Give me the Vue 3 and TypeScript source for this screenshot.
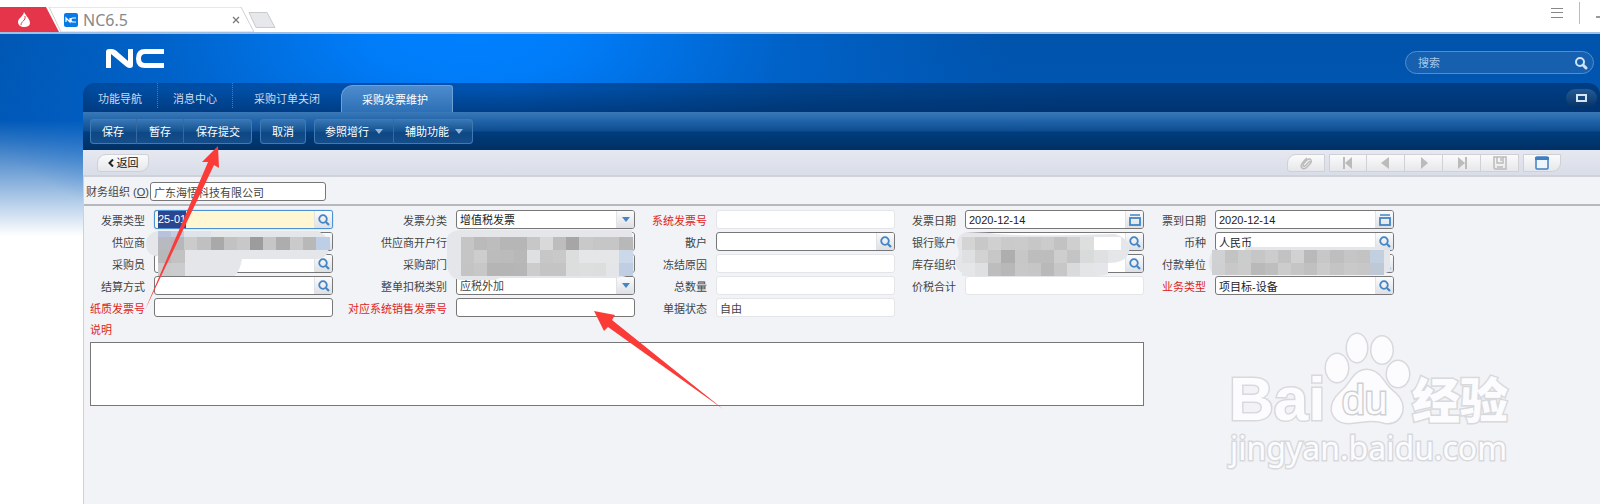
<script setup lang="ts">
import { ref } from 'vue'

type Kind = 'search' | 'select' | 'date' | 'text' | 'readonly'
interface Field {
  id: string
  label: string
  kind: Kind
  value?: string
  required?: boolean
  focused?: boolean
  soft?: boolean
}
interface Mosaic {
  x: number
  y: number
  h: number
  cells: string[]
}

const rows: (Field | null)[][] = [
  [
    { id: 'invoiceType', label: '发票类型', kind: 'search', value: '25-01', focused: true },
    { id: 'invoiceClass', label: '发票分类', kind: 'select', value: '增值税发票' },
    { id: 'systemNo', label: '系统发票号', kind: 'readonly', required: true },
    { id: 'invoiceDate', label: '发票日期', kind: 'date', value: '2020-12-14' },
    { id: 'arrivalDate', label: '票到日期', kind: 'date', value: '2020-12-14' },
  ],
  [
    { id: 'supplier', label: '供应商', kind: 'search' },
    { id: 'supplierBank', label: '供应商开户行', kind: 'search' },
    { id: 'retail', label: '散户', kind: 'search' },
    { id: 'bankAccount', label: '银行账户', kind: 'search' },
    { id: 'currency', label: '币种', kind: 'search', value: '人民币' },
  ],
  [
    { id: 'buyer', label: '采购员', kind: 'search' },
    { id: 'department', label: '采购部门', kind: 'search' },
    { id: 'freezeReason', label: '冻结原因', kind: 'readonly' },
    { id: 'stockOrg', label: '库存组织', kind: 'search' },
    { id: 'payer', label: '付款单位', kind: 'search' },
  ],
  [
    { id: 'settlement', label: '结算方式', kind: 'search' },
    { id: 'taxClass', label: '整单扣税类别', kind: 'select', value: '应税外加', soft: true },
    { id: 'totalQty', label: '总数量', kind: 'readonly' },
    { id: 'totalTax', label: '价税合计', kind: 'readonly' },
    { id: 'bizType', label: '业务类型', kind: 'search', value: '项目标-设备', required: true },
  ],
  [
    { id: 'paperNo', label: '纸质发票号', kind: 'text', required: true },
    { id: 'salesNo', label: '对应系统销售发票号', kind: 'text', required: true },
    { id: 'status', label: '单据状态', kind: 'readonly', value: '自由' },
    null,
    null,
  ],
]

const tabs = ['功能导航', '消息中心', '采购订单关闭', '采购发票维护']
const activeTab = ref('采购发票维护')
const actionGroups = [
  [{ text: '保存' }, { text: '暂存' }, { text: '保存提交' }],
  [{ text: '取消' }],
  [{ text: '参照增行', menu: true }, { text: '辅助功能', menu: true }],
]

const mosaics: Mosaic[] = [
  { x: 158, y: 231, h: 6, cells: ['#b9c2dc', '#c5cce2', '#dfe3ea', '#dfe3ea', '#e6e8e8', '#e6e8e8'] },
  { x: 158, y: 237, h: 13, cells: ['#b9babf', '#b5b7ba', '#cbcbcb', '#c0c0c0', '#a9a9a9', '#c2c2c2', '#c8c8c8', '#9c9c9c', '#c6c6c6', '#adadad', '#cacaca', '#b8b8b8', '#bdcfe6'] },
  { x: 158, y: 250, h: 13, cells: ['#b7b8ba', '#c2c2c3'] },
  { x: 158, y: 263, h: 13, cells: ['#c9cacc', '#cbccce'] },
  { x: 461, y: 237, h: 13, cells: ['#c5c5c5', '#bababa', '#bdbdbd', '#b6b6b6', '#b6b6b6', '#c7c7c7', '#d9d9d9', '#bdbdbd', '#a6a6a6', '#c9c9c9', '#c6c6c6', '#c6c6c6', '#b8b8b8'] },
  { x: 461, y: 250, h: 13, cells: ['#c5c5c5', '#cdcdcd', '#bcbcbc', '#bbbbbb', '#b8b8b8', '#dfe0e1', '#c7c7c7', '#c9c9c9', '#dcdddd', '#e5e6e7', '#e5e6e7', '#e5e6e7', '#cbd8e9'] },
  { x: 461, y: 263, h: 13, cells: ['#c4c4c4', '#c7c7c7', '#b5b5b5', '#b5b5b5', '#b6b6b6', '#cccccc', '#c4c4c4', '#c4c4c4', '#dcdddd', '#dddede', '#dcdddd', '#e3e5e8', '#bfcee2'] },
  { x: 962, y: 237, h: 13, cells: ['#d4d4d4', '#c8c8c8', '#d0d0d0', '#cacaca', '#cbcbcb', '#c7c7c7', '#cbcbcb', '#c2c2c2', '#cfcfcf', '#dddede', '#ffffff', '#ffffff'] },
  { x: 962, y: 250, h: 13, cells: ['#dfe0e1', '#d2d2d2', '#c7c7c7', '#aeaeae', '#c7c7c7', '#bdbdbd', '#bdbdbd', '#cecece', '#c4c4c4', '#d9dada', '#dfe0e1'] },
  { x: 962, y: 263, h: 13, cells: ['#e5e6e7', '#dfe0e1', '#bdbdbd', '#b8b8b8', '#c8c8c8', '#c6c6c6', '#b9b9b9', '#c7c7c7', '#d9dada', '#e4e5e7'] },
  { x: 1212, y: 250, h: 13, cells: ['#d0d1d2', '#c3c3c3', '#cbcccc', '#c6c6c6', '#cccccc', '#c2c2c2', '#d1d1d1', '#b9b9b9', '#c7c7c7', '#bebebe', '#c5c5c5', '#c3c3c3', '#c2cfdf'] },
  { x: 1212, y: 263, h: 12, cells: ['#cfd0d1', '#c8c8c8', '#cccccc', '#b9b9b9', '#bebebe', '#cccccc', '#c5c5c5', '#c0c0c0', '#cbcbcb', '#c4c4c4', '#c9c9c9', '#c7c7c7', '#bfc9d6'] },
]
</script>

<template>
  <div class="page">
    <header class="browser">
      <button class="home" aria-label="主页">
        <svg class="home-bg" viewBox="0 0 60 26" preserveAspectRatio="none"><path d="M0 0H46L59 26H0z" fill="#e5354b" /></svg>
        <svg class="flame" viewBox="0 0 14 17"><path d="M7 1C9 5 13 8 13 12C13 15 10 16 7 16C4 16 1 14 1 11C1 7 6 6 7 1z" fill="#fff" /><path d="M8 5C9 10 4 10 4 14" fill="none" stroke="#e5354b" stroke-width="1" /></svg>
      </button>
      <div class="browser-tab">
        <svg class="tab-bg" viewBox="0 0 206 26" preserveAspectRatio="none"><path d="M1 0H193L206 26H13z" fill="#fff" stroke="#cfcfcf" /></svg>
        <svg class="favicon" viewBox="0 0 14 14"><rect width="14" height="14" rx="2" fill="#087ae8" /><path d="M2 9V5L6 9V5M12 5H9Q7 5 7 7T9 9H12" fill="none" stroke="#fff" stroke-width="1.2" /></svg>
        <span class="tab-title">NC6.5</span>
        <button class="close" aria-label="关闭标签页"><svg viewBox="0 0 8 8"><path d="M1 1L7 7M7 1L1 7" stroke="#777" stroke-width="1.2" /></svg></button>
      </div>
      <button class="new-tab" aria-label="新标签页"><svg viewBox="0 0 28 16"><path d="M1 .5H19L27 15.500H8z" fill="#e7e8ec" stroke="#c9cacc" /></svg></button>
      <div class="window-tools">
        <button aria-label="菜单"><svg width="12" height="12" viewBox="0 0 12 12"><path d="M0 1.500H12M0 5.500H12M0 10.500H12" stroke="#888" /></svg></button>
        <i class="divider"></i>
        <button aria-label="最小化" class="minimise"><svg width="4" height="12" viewBox="0 0 4 12"><path d="M0 10H4" stroke="#999" stroke-width="2" /></svg></button>
      </div>
    </header>

    <div class="app">
      <div class="banner">
        <svg class="logo" viewBox="0 0 58 19" role="img" aria-label="NC"><path d="M0 19V3Q0 0 3 0H6Q8 0 10 1.500L22 12V0H27V16Q27 19 24 19Q22 19 20 17.500L5 5V19zM58 0H39Q30 0 30 9.500Q30 19 39 19H58V14H39Q35 14 35 9.500Q35 5 39 5H58z" fill="#fff" /></svg>
        <div class="global-search">
          <input aria-label="搜索" placeholder="搜索">
          <button aria-label="开始搜索"><svg viewBox="0 0 14 14"><circle cx="6" cy="6" r="4" /><path d="M9 9L12 12" stroke-width="3" stroke-linecap="round" /></svg></button>
        </div>
      </div>

      <div class="workspace">
        <nav class="tabs">
          <button v-for="(tab, i) in tabs" :key="tab" :class="['tab', `tab-${i}`, { active: tab === activeTab }]" @click="activeTab = tab">{{ tab }}</button>
          <button class="restore" aria-label="还原"><i></i></button>
        </nav>
        <div class="actions">
          <div v-for="(group, i) in actionGroups" :key="i" class="action-group">
            <button v-for="a in group" :key="a.text" :class="{ menu: 'menu' in a }">{{ a.text }}<i v-if="'menu' in a" class="caret"></i></button>
          </div>
        </div>
        <div class="subbar">
          <button class="back"><svg viewBox="0 0 6 8"><path d="M5 .5L1.500 4L5 7.500" fill="none" stroke="#222" stroke-width="2" /></svg>返回</button>
          <div class="pager">
            <button class="round-left" aria-label="附件"><svg viewBox="0 0 14 14"><path d="M11 5L6 10Q4 11 4 9Q4 8 8 4Q11 2 12 4Q13 6 10 9L7 12Q3 14 2 10Q2 8 5 5L8 2" fill="none" stroke="#bbb" stroke-width="1.500" /></svg></button>
            <div class="pager-group">
              <button aria-label="第一条"><svg viewBox="0 0 14 14"><path d="M2 1H4V13H2zM11 1V13L4 7z" /></svg></button>
              <button aria-label="上一条"><svg viewBox="0 0 14 14"><path d="M10 1V13L2 7z" /></svg></button>
              <button aria-label="下一条"><svg viewBox="0 0 14 14"><path d="M4 1V13L11 7z" /></svg></button>
              <button aria-label="最后一条"><svg viewBox="0 0 14 14"><path d="M3 1V13L10 7zM10 1H12V13H10z" /></svg></button>
              <button aria-label="保存"><svg viewBox="0 0 14 14"><path d="M1 1H13V13H2L1 12zM4 1V7H10V1M8 2V5M4 11H10" fill="none" stroke="#bbb" stroke-width="1.500" /></svg></button>
            </div>
            <button class="round-right" aria-label="卡片显示"><svg viewBox="0 0 14 14"><rect x="1" y="1" width="12" height="12" rx="1" fill="#edf5ff" stroke="#3f7fc4" stroke-width="1.500" /><path d="M0 1H14V4H0z" fill="#3f7fc4" /></svg></button>
          </div>
        </div>

        <form @submit.prevent>
          <div class="org">
            <label for="org">财务组织 (<u>O</u>)</label>
            <input id="org" class="box" value="广东海悟科技有限公司">
          </div>
          <div class="fields">
            <template v-for="(row, r) in rows" :key="r">
              <template v-for="(f, c) in row" :key="c">
                <template v-if="f">
                  <label :for="f.id" :class="{ required: f.required }">{{ f.label }}</label>
                  <div :class="['box', f.kind, { focused: f.focused, soft: f.soft }]">
                    <select v-if="f.kind === 'select'" :id="f.id"><option>{{ f.value }}</option></select>
                    <span v-else-if="f.focused" class="selection-wrap"><input :id="f.id" :value="f.value"><mark aria-hidden="true">{{ f.value }}</mark></span>
                    <input v-else :id="f.id" :value="f.value" :readonly="f.kind === 'readonly'">
                    <button v-if="f.kind === 'search'" type="button" class="addon" :aria-label="`选择${f.label}`"><svg viewBox="0 0 12 12"><circle cx="5" cy="5" r="3.800" /><path d="M8 8L11 11" stroke-width="2.200" /></svg></button>
                    <button v-if="f.kind === 'date'" type="button" class="addon" :aria-label="`选择${f.label}`"><svg viewBox="0 0 12 12"><path d="M1 1H11" stroke-width="1.500" /><rect x="1" y="4" width="10" height="7" /></svg></button>
                    <span v-if="f.kind === 'select'" class="addon drop"><i></i></span>
                  </div>
                </template>
                <template v-else><span></span><span></span></template>
              </template>
            </template>
          </div>
          <div class="note">
            <label for="note" class="required">说明</label>
            <textarea id="note"></textarea>
          </div>
        </form>
      </div>
    </div>

    <svg class="overlay" width="1600" height="504" viewBox="0 0 1600 504" aria-hidden="true">
      <g class="smudge">
        <path d="M158 231H318Q329 236 329 246Q329 259 315 259H242Q240 272 234 276H158V256Q146 256 146 243Q147 233 158 231z" />
        <path d="M460 230H632L634 270Q630 277 615 278H500L495 280H460Q447 278 447 262V238Q449 231 460 230z" />
        <path d="M966 232L990 233Q1010 237 1115 234Q1131 239 1129 252Q1126 263 1108 263V274Q1100 277 1080 276H970Q955 272 955 260Q962 255 957 246Q956 235 966 232z" />
        <path d="M1216 250H1245V247H1376V245L1384 247V250H1390V270Q1387 275 1370 275H1225Q1210 278 1209 264Q1209 252 1216 250z" />
      </g>
      <g shape-rendering="crispEdges">
        <template v-for="(m, i) in mosaics" :key="i">
          <rect v-for="(color, n) in m.cells" :key="n" :x="m.x + Math.round(n * 13.15)" :y="m.y" width="14" :height="m.h" :fill="color" />
        </template>
      </g>
      <g fill="#fb3b38">
        <path d="M218 146L202 162L208 162L145 310L214 165L219 168z" />
        <path d="M594 311L615 315L612 320L723 409L608 327L604 331z" />
      </g>
      <g class="watermark">
        <text x="1229" y="420" class="bai">Bai</text>
        <ellipse cx="1337" cy="368" rx="11" ry="14" />
        <ellipse cx="1357" cy="348" rx="10" ry="14" />
        <ellipse cx="1382" cy="350" rx="10.500" ry="13.500" />
        <ellipse cx="1398" cy="374" rx="11" ry="13" />
        <path d="M1367 370Q1376 370 1383 380Q1388 388 1396 394Q1404 402 1402 412Q1398 424 1386 423Q1376 420 1367 421Q1358 422 1349 423Q1335 423 1332 411Q1331 401 1340 393Q1347 387 1352 379Q1358 370 1367 370z" />
        <text x="1342" y="414" class="du">du</text>
        <text x="1412" y="418" class="exp">经验</text>
        <text x="1230" y="460" class="site">jingyan.baidu.com</text>
      </g>
    </svg>
  </div>
</template>

<style>
body { margin: 0; }
</style>

<style scoped>
* { box-sizing: border-box; }
.page { position: relative; min-height: 100vh; display: flex; flex-direction: column; overflow: hidden; background: #fff; font: 11px/16px "Liberation Sans", "Noto Sans CJK SC", sans-serif; color: #444; }
button, input, select, textarea { font: inherit; color: inherit; margin: 0; padding: 0; border: 0; background: none; outline: 0; min-width: 0; }
svg { display: block; }

.browser { display: flex; align-items: center; height: 34px; padding-top: 7px; border-bottom: 2px solid #9fbfe4; background: #fff; }
.home { position: relative; width: 48px; height: 25px; display: flex; align-items: center; justify-content: center; }
.home-bg { position: absolute; left: 0; top: 0; width: 60px; height: 25px; }
.flame { position: relative; width: 14px; height: 17px; }
.browser-tab { position: relative; display: flex; align-items: center; width: 206px; height: 25px; padding: 0 12px 0 16px; gap: 5px; }
.tab-bg { position: absolute; inset: 0; width: 100%; height: 100%; }
.favicon { position: relative; width: 14px; height: 14px; }
.tab-title { position: relative; flex: 1; font: 16px/24px "Noto Sans", sans-serif; color: #888; }
.close { position: relative; width: 10px; height: 10px; }
.close svg { width: 8px; height: 8px; }
.new-tab svg { width: 28px; height: 16px; }
.new-tab { margin-left: -6px; }
.window-tools { display: flex; align-items: center; margin-left: auto; height: 34px; padding-bottom: 14px; gap: 16px; }
.divider { width: 1px; height: 22px; background: #bbb; }

.app { flex: 1; display: flex; flex-direction: column; background: radial-gradient(ellipse 540px 240px at 470px 0, #0080ff 0, #007cf8 20%, #0067d2b0 60%, #0057b500 100%), linear-gradient(#0053aa 0, #0057b5 86px, #fff 202px); }
.banner { display: flex; align-items: center; justify-content: space-between; height: 49px; padding: 0 6px 0 106px; }
.logo { width: 58px; height: 19px; }
.global-search { display: flex; align-items: center; width: 189px; height: 23px; margin-top: 8px; padding: 0 5px 0 12px; border: 1px solid #4f8fd0; border-radius: 12px; background: #1660af; }
.global-search input { flex: 1; color: #b7d3ef; }
.global-search input::placeholder { color: #a8c8ea; opacity: 1; }
.global-search svg { width: 14px; height: 14px; fill: none; stroke: #cfe4fa; stroke-width: 2; }

.workspace { flex: 1; display: flex; flex-direction: column; margin-left: 83px; }
.tabs { display: flex; height: 29px; border-radius: 12px 12px 0 0; background: linear-gradient(90deg, #0050a8 0, #0058b8 420px, #00458f 720px, #003f86 1000px); box-shadow: inset 0 -20px 20px -6px #002b5f88, inset 0 0 4px #003b7c66; }
.tab { display: flex; align-items: center; justify-content: center; color: #c9dcf2; padding-top: 2px; }
.tab-0, .tab-1 { width: 75px; border-right: 1px dotted #3d7fc0; margin-bottom: 4px; padding-top: 6px; }
.tab-2 { width: 108px; }
.tab-3 { width: 112px; }
.tab.active { align-self: flex-end; height: 27px; color: #fff; border-radius: 12px 3px 0 0; background: linear-gradient(#4d8bce, #2e70b5); border: 1px solid #6ba2db; border-bottom: 0; padding-right: 4px; }
.restore { display: flex; align-items: center; justify-content: center; width: 31px; height: 18px; margin: 6px 3px 0 auto; border-radius: 9px; background: linear-gradient(#235a95, #073467); }
.restore i { width: 11px; height: 8px; border: 2px solid #d5e5f5; }
.actions { display: flex; align-items: center; gap: 8px; height: 38px; padding: 1px 7px 0; background: linear-gradient(#3a79b8 0, #2668ac 7px, #0d4c91 19px, #003d7e 20px, #003064 100%); }
.action-group { display: flex; height: 25px; border-radius: 4px; background: linear-gradient(#3b79b8, #13518f 50%, #0d4784 51%, #164f8b); box-shadow: inset 0 0 0 1px #3f7ab5; }
.action-group button { display: flex; align-items: center; justify-content: center; padding: 0 12px; color: #fff; }
.action-group button:only-child { padding: 0 12px; }
.action-group button.menu { padding: 0 10px 0 11px; }
.action-group button + button { border-left: 1px solid #35699f; }
.caret { margin-left: 6px; border: 4px solid transparent; border-top: 5px solid #95b6d8; border-bottom: 0; }

.subbar { display: flex; align-items: center; justify-content: space-between; height: 27px; padding: 0 39px 4px 14px; background: linear-gradient(#e6e8f1, #d8dde7); border-bottom: 2px solid #cfd2d8; }
.subbar button { display: flex; align-items: center; justify-content: center; height: 18px; background: linear-gradient(#fbfbfc, #e6e7ea); border: 1px solid #cfd1d5; }
.subbar .back { width: 52px; gap: 3px; margin-top: 4px; border-radius: 9px 3px 9px 3px; color: #111; }
.back svg { width: 6px; height: 8px; }
.pager { display: flex; gap: 4px; margin-top: 4px; }
.pager button { width: 38px; }
.pager svg { width: 14px; height: 14px; fill: #bbb; }
.pager-group { display: flex; }
.pager-group button + button { border-left: 0; }
.pager .round-left { border-radius: 9px 0 0 3px; }
.pager .round-right { border-radius: 0 0 9px 0; }

form { flex: 1; background: #f1f3f7; border-left: 1px solid #ccd2da; }
.org { display: flex; align-items: center; height: 29px; padding: 2px 2px 0; gap: 4px; border-bottom: 2px solid #b7b8be; }
.org label { width: 60px; white-space: nowrap; }
.org .box { width: 176px; padding: 0 3px; color: #444; }
.box { height: 19px; border: 1px solid #777; border-radius: 3px; background: #fff; }
.fields { display: grid; grid-template-columns: 54px minmax(0, 1fr) 103px minmax(0, 1fr) 61px minmax(0, 1fr) 50px minmax(0, 1fr) 51px minmax(0, 1fr); gap: 3px 10px; padding: 4px 206px 0 6px; align-items: center; }
.fields label { display: flex; justify-content: flex-end; margin-right: -1px; white-space: nowrap; padding-top: 2px; }
.required { color: #e01d22; }
.fields .box { position: relative; display: flex; overflow: hidden; color: #222; }
.fields .box input, .fields .box select { flex: 1; width: 0; height: 100%; padding-left: 3px; appearance: none; }
.fields .box.readonly { border-color: #e4e5e8; color: #444; }
.fields .box.soft { color: #444; }
.fields .box.focused { border-color: #4b91d4; box-shadow: 0 0 1px #4b91d4; background: #fff6d2; }
.selection-wrap { position: relative; display: flex; flex: 1; }
.selection-wrap mark { position: absolute; left: 3px; top: 0; height: 17px; line-height: 16px; background: #2b458e; color: #fff; }
.addon { display: flex; align-items: center; justify-content: center; width: 18px; background: linear-gradient(#fafbfc, #dde0e4); border-left: 1px solid #e0e2e5; }
.addon svg { width: 12px; height: 12px; fill: none; stroke: #4385c7; stroke-width: 1.8; }
.drop { pointer-events: none; }
.drop i { border: 4px solid transparent; border-top: 5px solid #4385c7; border-bottom: 0; }
.note { width: 1060px; max-width: 100%; padding: 4px 0 0 6px; }
.note label { display: block; line-height: 18px; margin-bottom: 3px; }
.note textarea { display: block; width: 100%; height: 64px; border: 1px solid #777; background: #fff; resize: none; }

.overlay { position: absolute; left: 0; top: 0; pointer-events: none; }
.smudge { fill: #e4e6ea; }
.watermark { fill: #fcfcff; stroke: #d8d9dc; stroke-width: 3; paint-order: stroke; }
.bai { font: bold 62px "Liberation Sans", sans-serif; }
.du { font: 41px "Liberation Sans", sans-serif; fill: #fcfcff; stroke: #cfd0d4; stroke-width: 3; }
.exp { font: 900 48px "Noto Sans CJK SC", sans-serif; }
.site { font: 32px "Noto Sans", sans-serif; }
</style>
